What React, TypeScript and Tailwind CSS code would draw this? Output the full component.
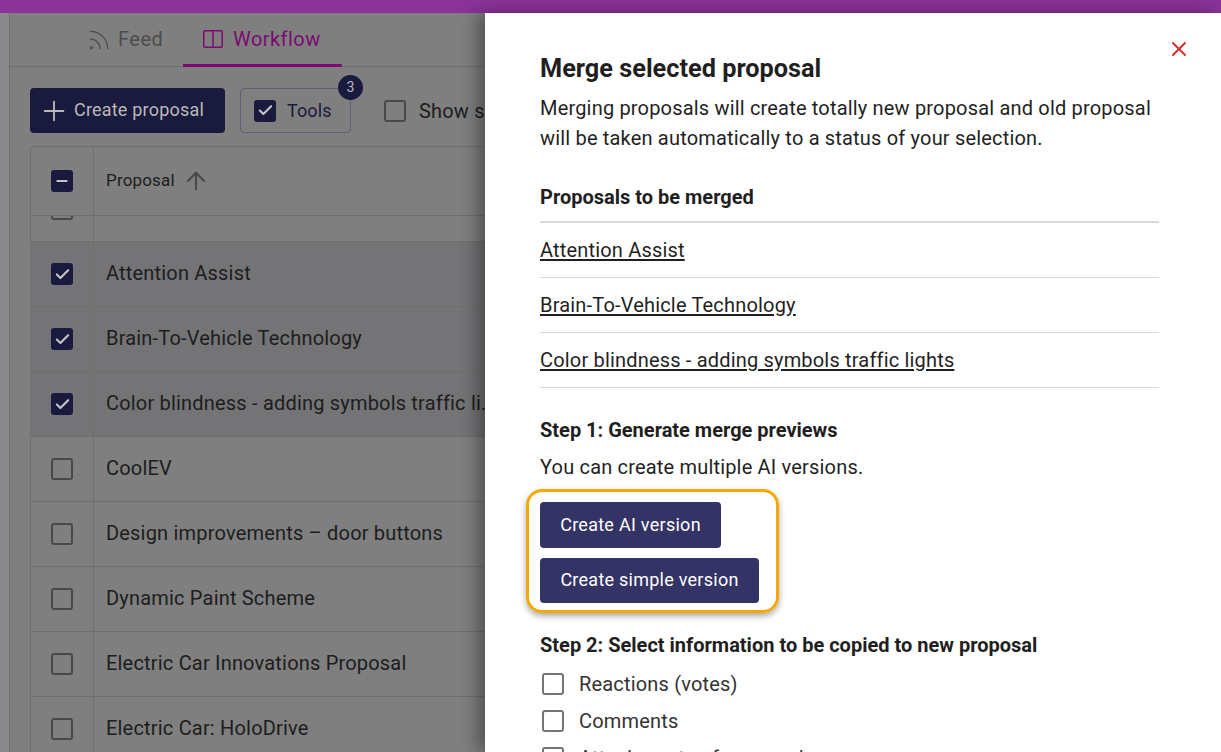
import React from 'react';
import { Rss, Plus, ArrowUp, Check, Minus, X } from 'lucide-react';

const font = { fontFamily: 'Roboto, sans-serif' };

const selectedRows = ['Attention Assist', 'Brain-To-Vehicle Technology', 'Color blindness - adding symbols traffic li...'];
const otherRows = ['CoolEV', 'Design improvements – door buttons', 'Dynamic Paint Scheme', 'Electric Car Innovations Proposal', 'Electric Car: HoloDrive'];
const merged = ['Attention Assist', 'Brain-To-Vehicle Technology', 'Color blindness - adding symbols traffic lights'];
const copyOptions = ['Reactions (votes)', 'Comments', 'Attachments of proposal'];

function DimBox({ checked, mixed }: { checked?: boolean; mixed?: boolean }) {
  if (checked || mixed) {
    return (
      <span className="flex h-[22px] w-[22px] shrink-0 items-center justify-center rounded-[3px] bg-[#1a1a3e] text-[#c4c4c4]">
        {mixed ? <Minus size={16} strokeWidth={3} /> : <Check size={17} strokeWidth={3} />}
      </span>
    );
  }
  return <span className="h-[22px] w-[22px] shrink-0 rounded-[3px] border-2 border-[#494949]" />;
}

function Row({ label, selected }: { label: string; selected?: boolean }) {
  return (
    <div className={`flex h-[65px] shrink-0 border-b border-[#6f6f6f] ${selected ? 'bg-[#747477]' : ''}`}>
      <div className="flex w-[63px] shrink-0 items-center justify-center border-r border-[#6f6f6f]">
        <DimBox checked={selected} />
      </div>
      <div className="flex min-w-0 flex-1 items-center pb-[2px] pl-3 text-[20px] tracking-[0.19px] whitespace-nowrap text-[#1d1d1d]">{label}</div>
    </div>
  );
}

export default function App() {
  return (
    <div className="flex h-[752px] w-[1221px] flex-col overflow-hidden bg-white" style={font}>
      <div className="h-[13px] shrink-0 bg-[#8a3399]" />
      <div className="flex min-h-0 flex-1">
        {/* page behind the drawer, dimmed */}
        <div className="relative flex w-[485px] shrink-0 overflow-hidden bg-[#7f7f7f]">
          <div className="w-[10px] shrink-0 border-r border-[#6f6f6f] bg-[#8a898d]" />
          <div className="flex min-w-0 flex-1 flex-col">
            <div className="flex h-[54px] shrink-0 border-b border-[#6f6f6f] pl-[59px]">
              <div className="flex w-[114px] shrink-0 items-center gap-[6px] pl-[17px] text-[20px] tracking-[0.5px] text-[#4d4d4d]">
                <Rss size={26} strokeWidth={1.1} />
                <span className="pb-[2px]">Feed</span>
              </div>
              <div className="-mb-px flex w-[159px] shrink-0 items-center gap-[10px] border-b-[3px] border-[#7c0a72] pl-[20px] text-[20px] tracking-[0.45px] text-[#7c0a72]">
                <svg width="20" height="18" viewBox="0 0 20 18" fill="none" stroke="currentColor" strokeWidth="1.5">
                  <rect x="0.75" y="0.75" width="18.5" height="16.5" rx="1.5" />
                  <path d="M10 1v16" />
                </svg>
                Workflow
              </div>
            </div>
            <div className="mt-[21px] flex h-[45px] shrink-0 items-center pl-[20px]">
              <div className="flex h-[45px] w-[195px] shrink-0 items-center gap-[4px] rounded-[4px] bg-[#1a1a3e] pl-[8px] text-[18px] tracking-[0.2px] whitespace-nowrap text-[#b9b9b9]">
                <Plus size={32} strokeWidth={1.4} className="shrink-0" />
                <span className="pb-[2px]">Create proposal</span>
              </div>
              <div className="relative ml-[15px] flex h-[45px] w-[111px] shrink-0 items-center gap-[11px] rounded-[4px] border border-[#5f5f78] pl-[13px] text-[18px] tracking-[0.1px] text-[#1a1a3e]">
                <DimBox checked />
                Tools
                <span className="absolute -top-[14px] -right-[13px] flex h-[25px] w-[25px] items-center justify-center rounded-full bg-[#1a1a3e] text-[14px] text-[#b9b9b9]">3</span>
              </div>
              <div className="ml-[33px] flex shrink-0 items-center gap-[13px] text-[20px] tracking-[0.19px] whitespace-nowrap text-[#1d1d1d]">
                <DimBox />
                Show selected
              </div>
            </div>
            <div className="mt-[13px] ml-[20px] flex min-h-0 flex-1 flex-col overflow-hidden rounded-t-[4px] border-t border-l border-[#6f6f6f]">
              <div className="flex h-[69px] shrink-0 border-b border-[#6f6f6f]">
                <div className="flex w-[63px] shrink-0 items-center justify-center border-r border-[#6f6f6f]">
                  <DimBox mixed />
                </div>
                <div className="flex items-center gap-[7px] pl-3 text-[17px] tracking-[0.17px] text-[#1d1d1d]">
                  Proposal
                  <ArrowUp size={28} strokeWidth={1.8} className="text-[#494949]" />
                </div>
              </div>
              <div className="flex h-[26px] shrink-0 border-b border-[#6f6f6f]">
                <div className="relative w-[63px] shrink-0 overflow-hidden border-r border-[#6f6f6f]">
                  <span className="absolute -top-[18px] left-[20px] h-[22px] w-[22px] rounded-[3px] border-2 border-[#494949]" />
                </div>
              </div>
              {selectedRows.map((r) => <Row key={r} label={r} selected />)}
              {otherRows.map((r) => <Row key={r} label={r} />)}
            </div>
          </div>
        </div>

        {/* merge drawer */}
        <div className="relative min-w-0 flex-1 overflow-hidden bg-white pt-[42px] pr-[62px] pl-[55px] text-[#1f1f1f] shadow-[-8px_0_16px_rgba(0,0,0,0.35)]">
          <X size={24} strokeWidth={2} className="absolute top-[24px] right-[30px] text-[#d32f2f]" />
          <h1 className="pb-[1px] text-[25.3px] leading-[27px] font-bold text-[#1f1f1f]">Merge selected proposal</h1>
          <p className="mt-[10px] text-[20px] leading-[30px] tracking-[0.18px]">
            Merging proposals will create totally new proposal and old proposal will be taken automatically to a status of your selection.
          </p>
          <h2 className="mt-[32px] border-b-2 border-[#d9d9d9] pb-[12px] text-[20px] leading-[24px] font-bold">Proposals to be merged</h2>
          {merged.map((m) => (
            <div key={m} className="flex h-[55px] items-center border-b border-[#d9d9d9] text-[20px] tracking-[0.18px]">
              <span className="underline underline-offset-2">{m}</span>
            </div>
          ))}
          <h2 className="mt-[30px] text-[20px] leading-[24px] font-bold">Step 1: Generate merge previews</h2>
          <p className="mt-[10px] text-[20px] leading-[30px] tracking-[0.18px]">You can create multiple AI versions.</p>
          <div className="mt-[7px] -ml-[14px] flex w-[253px] flex-col items-start gap-[10px] rounded-[16px] border-[3px] border-[#f5a800] pt-[10px] pb-[7px] pl-[11px] shadow-[0_3px_6px_rgba(0,0,0,0.35)]">
            <button className="h-[46px] w-[181px] rounded-[4px] bg-[#333366] pb-[2px] text-[18px] tracking-[0.27px] text-white">Create AI version</button>
            <button className="h-[45px] w-[219px] rounded-[4px] bg-[#333366] pb-[2px] text-[18px] tracking-[0.25px] text-white">Create simple version</button>
          </div>
          <h2 className="mt-[20px] text-[20px] leading-[24px] font-bold">Step 2: Select information to be copied to new proposal</h2>
          <div className="mt-[16px] flex flex-col gap-[15px]">
            {copyOptions.map((o) => (
              <div key={o} className="flex h-[22px] items-center gap-[15px] pl-[2px] text-[20px] tracking-[0.18px] text-[#333]">
                <span className="h-[22px] w-[22px] shrink-0 rounded-[3px] border-2 border-[#757575]" />
                {o}
              </div>
            ))}
          </div>
        </div>
      </div>
    </div>
  );
}
